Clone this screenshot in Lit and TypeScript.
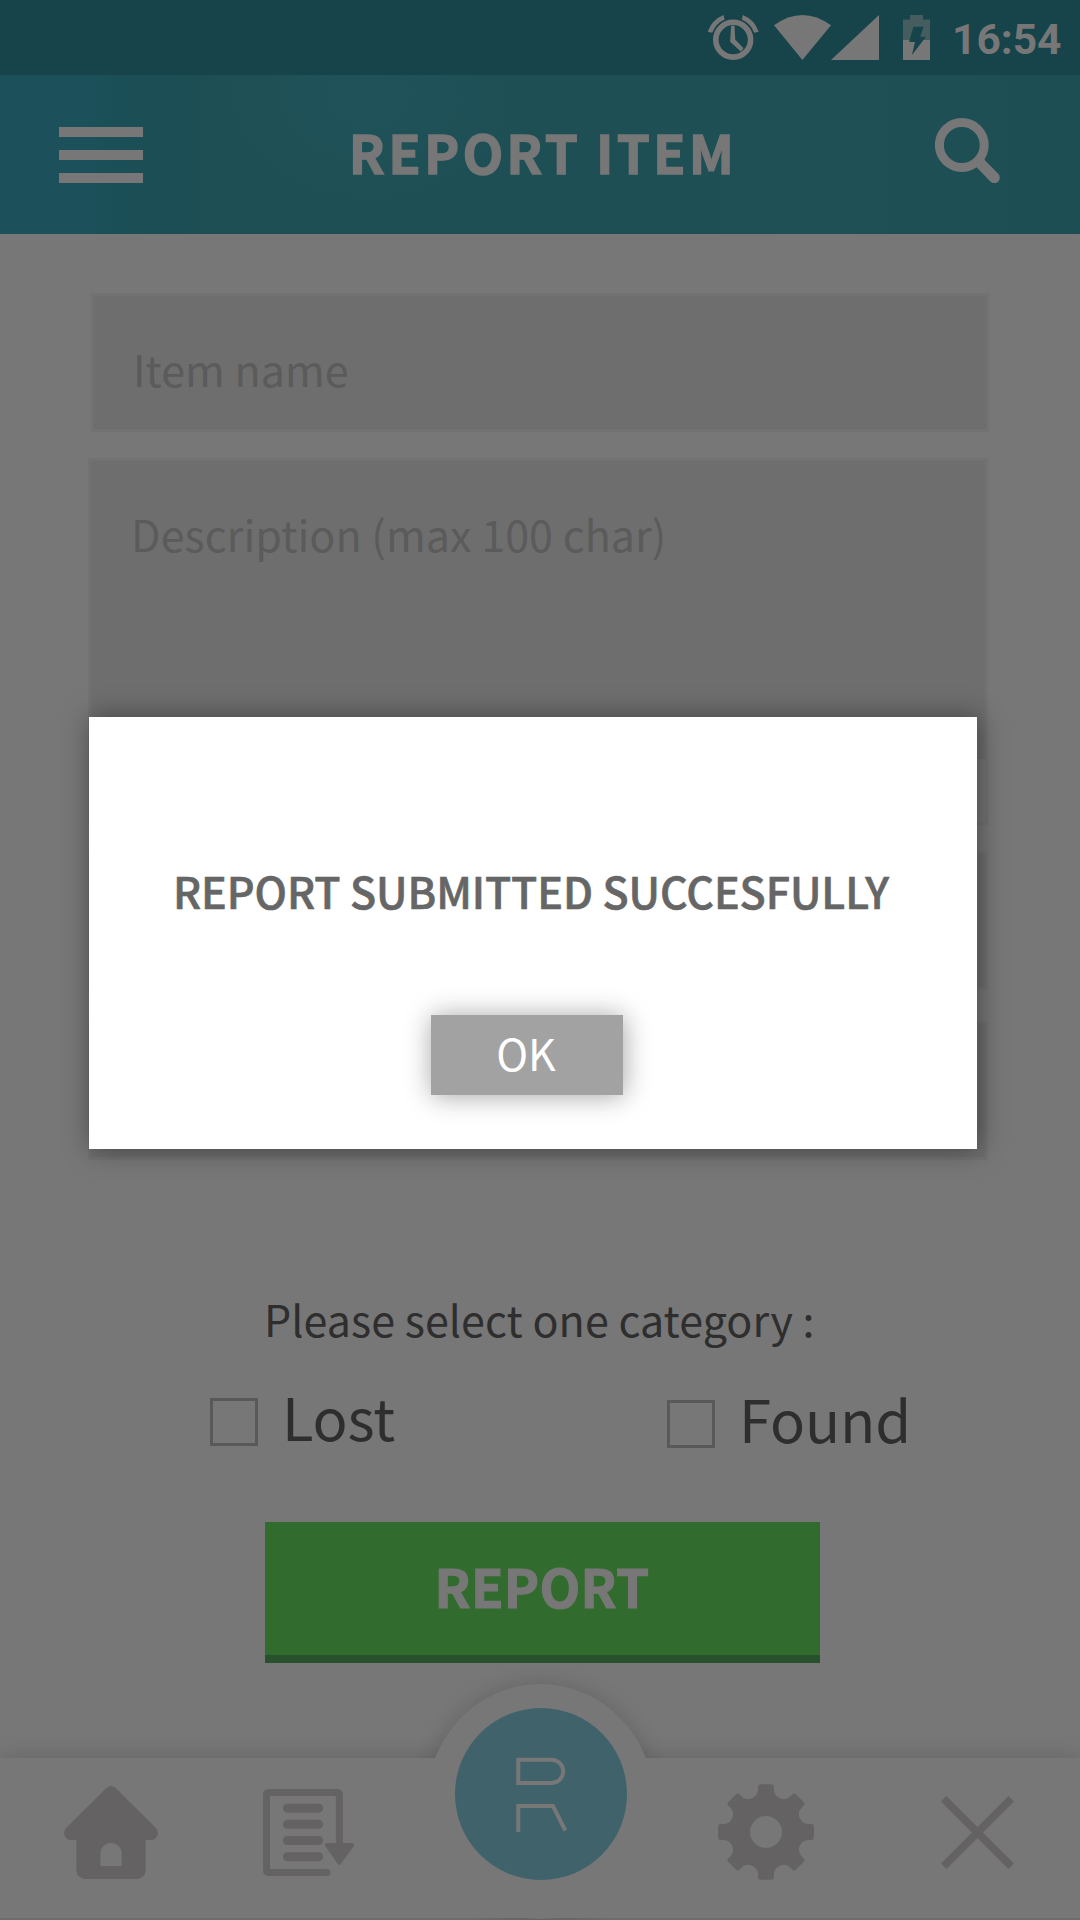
import { LitElement, html, css } from "lit";
import { customElement, property } from "lit/decorators.js";

/** Outline of an eight-toothed cog centred on the origin. */
function cogPath(): string {
  const parts: string[] = [];
  for (let i = 0; i < 8; i++) {
    const a = (i * Math.PI) / 4;
    const p = (x: number, y: number) =>
      `${(x * Math.cos(a) - y * Math.sin(a)).toFixed(2)} ${(x * Math.sin(a) + y * Math.cos(a)).toFixed(2)}`;
    const start = p(-23.7, -128);
    parts.push(
      i === 0 ? `M${start}` : `A29.4 29.4 0 0 0 ${start}`,
      `L${p(-23.7, -136)}`,
      `Q${p(-23.7, -143.5)} ${p(-16, -143.5)}`,
      `L${p(16, -143.5)}`,
      `Q${p(23.7, -143.5)} ${p(23.7, -136)}`,
      `L${p(23.7, -128)}`,
    );
  }
  parts.push(`A29.4 29.4 0 0 0 -23.7 -128Z`);
  return parts.join("") + "M48 0A48 48 0 1 0 -48 0A48 48 0 1 0 48 0Z";
}

@customElement("status-bar")
class StatusBar extends LitElement {
  static styles = css`
    :host {
      display: flex;
      justify-content: flex-end;
      align-items: flex-start;
      box-sizing: border-box;
      height: 75px;
      padding: 15px 18px 0 0;
      background: #16444a;
      color: #777;
    }
    svg { display: block; flex: none; fill: currentColor; }
    .alarm { margin-right: 15px; }
    .signal { margin-right: 24px; }
    .battery { margin-right: 22px; }
    .faded { fill: #465d60; }
    .bolt { fill: #16444a; }
    .time { width: 110px; font: 700 42.5px/50px Roboto, sans-serif; white-space: nowrap; }
  `;
  render() {
    return html`
      <svg class="alarm" width="52" height="45" viewBox="0 0 52 45">
        <circle cx="26.2" cy="24.7" r="17.4" fill="none" stroke="currentColor" stroke-width="5.6" />
        <path d="M24.1 10.7H27.6L28.2 24.5L36.5 33.2L33.8 36.6L23.1 26.8Z" />
        <path d="M.7 16.7A28 28 0 0 1 16.5 0L17.6 4.5A24 24 0 0 0 5.2 17.7Z" />
        <path d="M51.7 16.7A28 28 0 0 0 35.9 0L34.8 4.5A24 24 0 0 1 47.2 17.7Z" />
      </svg>
      <svg width="57" height="45" viewBox="0 0 57 45"><path d="M0 10.3Q28.4 -10.3 57 10.3L28.4 45Z" /></svg>
      <svg class="signal" width="48" height="45" viewBox="0 0 48 45"><path d="M0 45L48 0V45Z" /></svg>
      <svg class="battery" width="27" height="45" viewBox="0 0 27 45">
        <path class="faded" d="M0 4.500H7V0H20V4.500H27V25H0Z" />
        <path d="M0 25H27V45H0Z" />
        <path class="bolt" d="M10.400 11.700H20.600L17.200 21.700H23L8.900 40L12 27H6.100Z" />
      </svg>
      <span class="time">16:54</span>
    `;
  }
}

@customElement("app-header")
class AppHeader extends LitElement {
  static styles = css`
    :host {
      display: flex;
      justify-content: space-between;
      align-items: flex-start;
      box-sizing: border-box;
      height: 159px;
      padding: 0 80px 0 59px;
      color: #777;
      background:
        radial-gradient(ellipse 160px 120px at 370px 20px, #20525a 0%, transparent 100%),
        linear-gradient(90deg, #1c515c 0, #1c515b 80px, #1b4e55 145px, #1d4f54 220px, #1d4f55 640px, #1e5056 820px, #1c4e54 1080px);
    }
    .menu { display: flex; flex-direction: column; gap: 13.6px; width: 84px; margin-top: 52px; }
    .line { height: 9.6px; background: #777; }
    .title {
      margin: 46px 0 0 8px;
      font: 700 53px/60px "Noto Sans CJK SC", "Noto Sans", sans-serif;
      letter-spacing: 3.15px;
      -webkit-text-stroke: 1.3px #777;
      white-space: nowrap;
    }
    .search { display: block; margin-top: 43px; }
  `;
  render() {
    return html`
      <div class="menu"><div class="line"></div><div class="line"></div><div class="line"></div></div>
      <h1 class="title">REPORT ITEM</h1>
      <svg class="search" width="65" height="65" viewBox="0 0 65 65" fill="none" stroke="currentColor">
        <circle cx="26.8" cy="27" r="22.4" stroke-width="9" />
        <path d="M44 44L59.3 59.7" stroke-width="11" stroke-linecap="round" />
      </svg>
    `;
  }
}

@customElement("category-option")
class CategoryOption extends LitElement {
  @property() label = "";
  static styles = css`
    :host { display: flex; gap: 24px; color: #2e2e2e; }
    .box { box-sizing: border-box; width: 48px; height: 48px; margin-top: 17px; border: 3px solid #595959; }
    .label {
      font: 400 58px/70px "Noto Sans CJK SC", "Noto Sans", sans-serif;
      letter-spacing: -0.15px;
      white-space: nowrap;
    }
  `;
  render() {
    return html`<span class="box"></span><span class="label">${this.label}</span>`;
  }
}

@customElement("report-form")
class ReportForm extends LitElement {
  static styles = css`
    :host {
      display: flex;
      flex-direction: column;
      box-sizing: border-box;
      height: 1524px;
      padding: 59px 92px 0 88px;
      font: 400 43px/60px "Noto Sans CJK SC", "Noto Sans", sans-serif;
      color: #2e2e2e;
    }
    .field {
      box-sizing: border-box;
      width: 900px;
      height: 139px;
      padding: 42px 39px 0;
      border: 3px solid #727272;
      background: #6e6e6e;
      color: #5b5b5b;
      white-space: nowrap;
    }
    .name { width: 898px; margin-left: 3px; }
    .description { height: 301px; margin-top: 26px; padding-left: 40px; border-bottom: 0; letter-spacing: 0.05px; }
    .counter { height: 66px; background: #757575; border-top: 0; }
    .third { margin-top: 26px; }
    .fourth { margin-top: 31px; }
    .prompt { margin: 128px 0 0 176px; letter-spacing: 0.06px; white-space: nowrap; }
    .options { display: flex; gap: 271px; margin: 33px 0 0 122px; }
    .lost { width: 186px; }
    .found { margin-top: 2px; }
    .submit {
      display: flex;
      justify-content: center;
      box-sizing: border-box;
      width: 555px;
      height: 141px;
      margin: 69px 0 0 177px;
      padding: 33px 1px 0 0;
      border-bottom: 8px solid #28502d;
      background: #326b2e;
      color: #777;
      font-weight: 700;
      font-size: 53px;
      -webkit-text-stroke: 1.2px #777;
      letter-spacing: 0.3px;
    }
  `;
  render() {
    return html`
      <div class="field name">Item name</div>
      <div class="field description">Description (max 100 char)</div>
      <div class="field counter"></div>
      <div class="field third"></div>
      <div class="field fourth"></div>
      <div class="prompt">Please select one category :</div>
      <div class="options">
        <category-option class="lost" label="Lost"></category-option>
        <category-option class="found" label="Found"></category-option>
      </div>
      <div class="submit">REPORT</div>
    `;
  }
}

@customElement("nav-bar")
class NavBar extends LitElement {
  static styles = css`
    :host {
      display: flex;
      align-items: center;
      justify-content: space-between;
      box-sizing: border-box;
      position: relative;
      height: 162px;
      padding: 0 66px 12px 64px;
      border-bottom: 2px solid #6d6d6d;
      background: #777;
      color: #656263;
      box-shadow: 0 0 22px rgba(0, 0, 0, 0.16);
    }
    svg { display: block; fill: currentColor; }
    .group { display: flex; align-items: center; position: relative; }
    .left { gap: 105px; }
    .right { gap: 127px; }
    .hump {
      position: absolute;
      left: 427px;
      top: -74px;
      width: 227px;
      height: 235px;
      border-radius: 50%;
      background: #777;
      box-shadow: 0 0 22px rgba(0, 0, 0, 0.16);
    }
    .cover { position: absolute; left: 380px; right: 380px; top: 0; height: 160px; background: #777; }
    .badge { position: absolute; left: 455px; top: -50px; }
  `;
  render() {
    return html`
      <div class="hump"></div>
      <div class="cover"></div>
      <div class="group left">
        <svg width="94" height="93" viewBox="192 378 282 279">
          <path fill-rule="evenodd" d="M318 385Q333 371 348 385L467 503Q476 512 473 524Q468 540 454 540H437V630Q435 655 410 657H256Q231 655 229 630V540H212Q198 540 193 524Q190 512 199 503ZM301 618H365V581A32 32 0 0 0 301 581Z" />
        </svg>
        <svg width="91" height="87" viewBox="789 387 273 261">
          <path d="M1018 552V404Q1018 397.500 1011 397.500H807Q799.500 397.500 799.500 405V630Q799.500 637.500 807 637.500H981" fill="none" stroke="currentColor" stroke-width="21" stroke-linecap="round" />
          <path d="M862 444.500H956M862 493H956M862 541.500H956M862 590H956" fill="none" stroke="currentColor" stroke-width="27" stroke-linecap="round" />
          <path d="M980 549H1057Q1065 551 1061 559L1023 612Q1018 618 1013 612L976 559Q972 551 980 549Z" />
        </svg>
      </div>
      <div class="group right">
        <svg width="96" height="96" viewBox="-144 -144 288 288"><path fill-rule="evenodd" d=${cogPath()} /></svg>
        <svg width="73" height="73" viewBox="0 0 73 73"><path d="M2.700 2.700L70.300 70.300M70.300 2.700L2.700 70.300" stroke="currentColor" stroke-width="7.800" /></svg>
      </div>
      <svg class="badge" width="172" height="172" viewBox="0 0 172 172">
        <circle cx="86" cy="86" r="86" fill="#3f626b" />
        <path d="M63.300 51.700H96.500A11.700 11.700 0 0 1 96.500 75.100H63.300ZM63.300 124V98H98L110.300 122.500" fill="none" stroke="#777" stroke-width="4" />
      </svg>
    `;
  }
}

@customElement("success-dialog")
class SuccessDialog extends LitElement {
  static styles = css`
    :host {
      display: flex;
      flex-direction: column;
      align-items: center;
      box-sizing: border-box;
      width: 888px;
      height: 432px;
      padding-top: 143px;
      background: #fff;
      box-shadow: 2px 0 26px rgba(0, 0, 0, 0.4);
      font: 400 43px/60px "Noto Sans CJK SC", "Noto Sans", sans-serif;
    }
    .message {
      margin-right: 4px;
      font-weight: 500;
      letter-spacing: -0.09px;
      -webkit-text-stroke: 0.6px #666;
      color: #666;
      white-space: nowrap;
    }
    .ok {
      display: flex;
      justify-content: center;
      box-sizing: border-box;
      width: 192px;
      height: 80px;
      margin: 95px 12px 0 0;
      padding: 7px 2px 0 0;
      background: #a2a2a2;
      color: #fff;
      box-shadow: 1px 1px 25px rgba(0, 0, 0, 0.36);
    }
  `;
  render() {
    return html`
      <div class="message">REPORT SUBMITTED SUCCESFULLY</div>
      <div class="ok">OK</div>
    `;
  }
}

@customElement("app-root")
class AppRoot extends LitElement {
  static styles = css`
    :host {
      display: block;
      position: relative;
      width: 1080px;
      height: 1920px;
      overflow: hidden;
      background: #777;
    }
    .dialog { position: absolute; left: 89px; top: 717px; }
  `;
  render() {
    return html`
      <status-bar></status-bar>
      <app-header></app-header>
      <report-form></report-form>
      <nav-bar></nav-bar>
      <success-dialog class="dialog"></success-dialog>
    `;
  }
}
